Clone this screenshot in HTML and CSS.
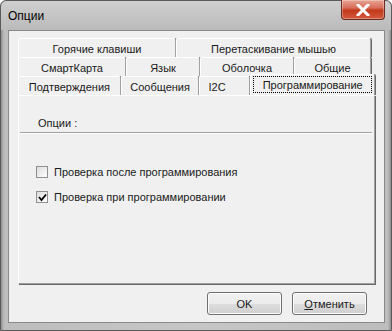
FILE: index.html
```html
<!DOCTYPE html>
<html>
<head>
<meta charset="utf-8">
<link rel="stylesheet" href="styles.css">
</head>
<body>
<div class="window">
  <div class="titlebar">
    <span class="title">Опции</span>
    <div class="close">
      <svg width="14" height="12" viewBox="0 0 14 12"><path d="M2 1 L12 11 M12 1 L2 11" stroke="#fff" stroke-width="3" stroke-linecap="square"/></svg>
    </div>
  </div>
  <div class="client">
    <div class="tabs">
      <div class="row">
        <div class="tab w-hot">Горячие клавиши</div>
        <div class="tab w-drag">Перетаскивание мышью</div>
      </div>
      <div class="row">
        <div class="tab w-smart">СмартКарта</div>
        <div class="tab w-lang">Язык</div>
        <div class="tab w-shell">Оболочка</div>
        <div class="tab w-gen">Общие</div>
      </div>
      <div class="row">
        <div class="tab w-conf">Подтверждения</div>
        <div class="tab w-msg">Сообщения</div>
        <div class="tab w-i2c">I2C</div>
        <div class="tab active w-prog"><span class="focus">Программирование</span></div>
      </div>
    </div>
    <div class="panel">
      <div class="group-label">Опции :</div>
      <div class="rule"></div>
      <label class="check"><span class="box"></span>Проверка после программирования</label>
      <label class="check"><span class="box"><svg width="9" height="9" viewBox="0 0 9 9"><path d="M1 4 L3.5 7 L8 1.5" stroke="#000" stroke-width="1.8" fill="none"/></svg></span>Проверка при программировании</label>
    </div>
    <div class="buttons">
      <div class="btn">OK</div>
      <div class="btn"><u>О</u>тменить</div>
    </div>
  </div>
</div>
</body>
</html>
```
FILE: styles.css
```css
* { box-sizing: border-box; }
html, body { margin: 0; padding: 0; background: #fff; }
body { font-family: "Liberation Sans", Arial, sans-serif; font-size: 11px; color: #1a1a1a; }
.window {
  width: 392px; height: 331px;
  background: linear-gradient(to right, #8e8e8e 0, #bdbdbd 3px, #c6c6c6 50%, #bdbdbd calc(100% - 3px), #8e8e8e 100%);
  border: 1px solid #5a5a5a;
  border-radius: 6px 6px 0 0;
  display: flex; flex-direction: column;
  position: relative;
}
.titlebar {
  height: 29px; position: relative;
  background: linear-gradient(to bottom, #cfcfcf, #bababa);
  border-radius: 6px 6px 0 0;
  display: flex; align-items: center;
}
.title { margin-left: 7px; font-size: 12px; color: #000; }
.close {
  position: absolute; right: 6px; top: -1px;
  width: 44px; height: 20px;
  border: 1px solid #6b2c22; border-top: none;
  border-radius: 0 0 4px 4px;
  background: linear-gradient(to bottom, #e8a493 0, #d8705c 40%, #c23a1c 55%, #d4593e 100%);
  display: flex; align-items: center; justify-content: center;
  box-shadow: inset 0 0 0 1px rgba(255,255,255,0.3);
}
.client {
  flex: 1;
  margin: 0 6px 7px 7px;
  background: #f0f0f0;
  border: 1px solid #8a8a8a;
  padding: 7px 9px 0 9px;
  display: flex; flex-direction: column;
}
.tabs { display: flex; flex-direction: column; }
.row { display: flex; height: 19px; }
.tab {
  height: 19px;
  background: #f0f0f0;
  border-top: 1px solid #fff;
  border-left: 1px solid #fff;
  border-right: 1px solid #a0a0a0;
  box-shadow: 1px 0 0 #696969;
  border-radius: 2px 2px 0 0;
  display: flex; align-items: center; justify-content: center;
  padding-top: 1px;
}
.w-hot { width: 158px; }
.w-drag { width: 195px; }
.w-smart { width: 108px; }
.w-lang { width: 74px; }
.w-shell { width: 94px; }
.w-gen { width: 77px; }
.w-conf { width: 103px; }
.w-msg { width: 79px; }
.w-i2c { width: 51px; justify-content: flex-start; padding-left: 8px; }
.tab.active {
  height: 21px; margin-top: -2px; width: 125px;
  position: relative; z-index: 2;
  padding: 1px 2px 2px 2px;
}
.focus { border: 1px dotted #000; flex: 1; text-align: center; line-height: 14px; align-self: stretch; display: flex; align-items: center; justify-content: center; }
.panel {
  height: 189px;
  border-left: 1px solid #fff;
  border-top: 1px solid #fff;
  border-right: 1px solid #a0a0a0;
  border-bottom: 1px solid #a0a0a0;
  box-shadow: 1px 1px 0 #696969;
  display: flex; flex-direction: column;
  padding-top: 21px;
}
.group-label { margin-left: 19px; height: 14px; }
.rule { height: 2px; border-top: 1px solid #a0a0a0; border-bottom: 1px solid #fff; margin: 1px 2px 0 1px; }
.check { display: flex; align-items: center; margin-left: 17px; height: 16px; }
.check:first-of-type { margin-top: 30px; }
.check + .check { margin-top: 9px; }
.box {
  width: 12px; height: 12px;
  border: 1px solid #8e8f8f;
  background: linear-gradient(135deg, #dcdcdc, #fff);
  margin-right: 6px;
  display: flex; align-items: center; justify-content: center;
}
.buttons { display: flex; justify-content: flex-end; gap: 10px; margin-top: 8px; margin-right: 8px; }
.btn {
  width: 75px; height: 23px;
  border: 1px solid #707070;
  border-radius: 3px;
  background: linear-gradient(to bottom, #f2f2f2 0, #ebebeb 50%, #dddddd 51%, #cfcfcf 100%);
  display: flex; align-items: center; justify-content: center;
  box-shadow: inset 0 0 0 1px #fcfcfc;
}
```
